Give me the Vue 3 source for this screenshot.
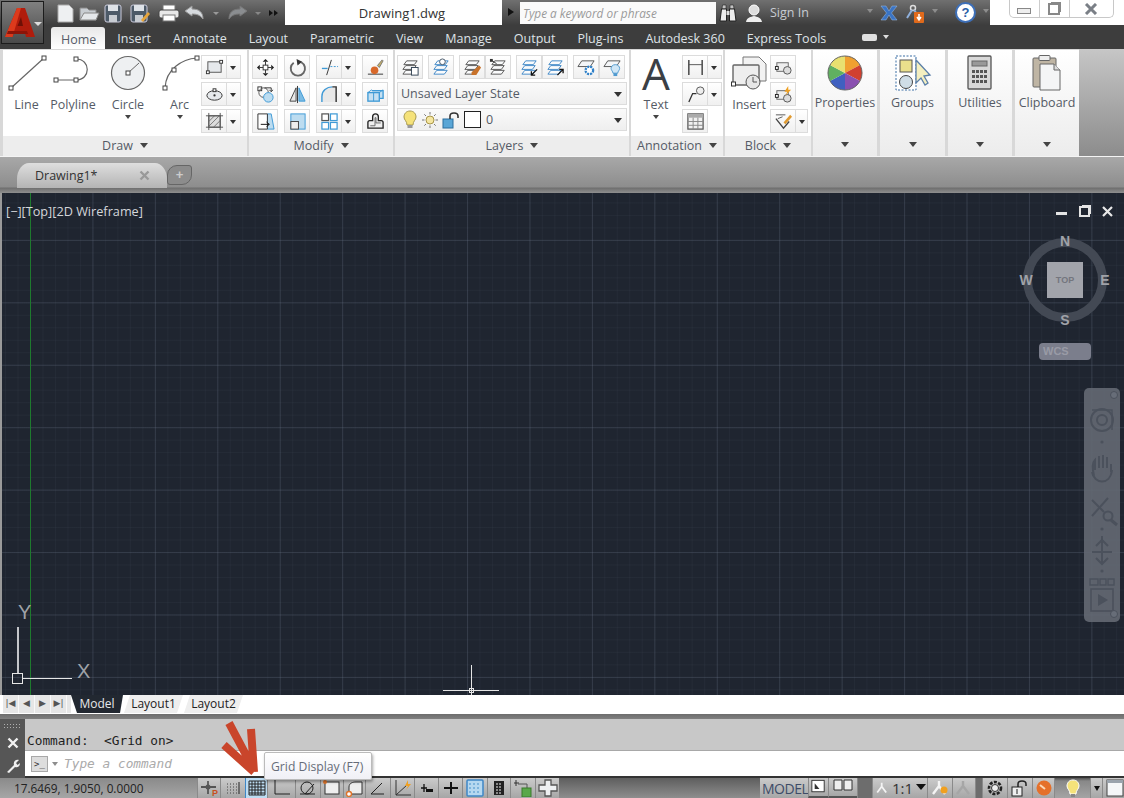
<template>
  <div class="app">
    <!-- application button sits over title bar and tabs -->
    <div class="app-btn">
      <svg width="36" height="36" viewBox="0 0 36 36">
        <path d="M3 32 L15 3 H23 L33 32 H24 L22.5 26 H13 L10.5 32 Z" fill="#b01c0c" />
        <path d="M3 32 L15 3 H19 L10.5 32 Z" fill="#dc3a1c" />
        <path d="M15.5 21 H21 L19 12 Z" fill="#6e1006" />
        <path d="M6 26 H25 L26 29 H5 Z" fill="#8c1408" />
      </svg>
      <span class="app-caret"></span>
    </div>

    <div class="titlebar">
      <div class="qat">
        <svg v-for="q in qat" :key="q.name" class="qi" :width="q.w" height="20" :viewBox="`0 0 ${q.w} 20`" v-html="q.svg"></svg>
      </div>
      <div class="docname">Drawing1.dwg</div>
      <div class="search-arrow"></div>
      <div class="search">Type a keyword or phrase</div>
      <div class="infocenter">
        <svg width="20" height="20" viewBox="0 0 20 20">
          <path d="M4.5 2 H8 V6 H4 Z M12 2 H15.5 L16 6 H12 Z" fill="#c4c4c4" stroke="#222" stroke-width="0.6" />
          <path d="M2 18 L3.5 6 H8.5 V18 Z M11.5 18 V6 H16.5 L18 18 Z" fill="#ececec" stroke="#222" />
          <rect x="8.5" y="8" width="3" height="4" fill="#ddd" />
        </svg>
        <svg width="18" height="20" viewBox="0 0 18 20">
          <circle cx="9" cy="7" r="5" fill="#ddd" stroke="#fff" />
          <path d="M1 19 C2 14 6 14 9 13 C12 14 16 14 17 19 Z" fill="#eee" />
        </svg>
        <span class="signin">Sign In</span>
        <span class="mini-caret"></span>
        <svg width="18" height="18" viewBox="0 0 18 18">
          <path d="M1 2 H6 L9 7 L12 2 H17 L11.5 9 L17 16 H12 L9 11 L6 16 H1 L6.5 9 Z" fill="#3a74c4" stroke="#9dbce6" stroke-width="0.5" />
        </svg>
        <svg width="20" height="20" viewBox="0 0 20 20">
          <circle cx="8" cy="5" r="2.5" fill="none" stroke="#ddd" stroke-width="1.5" />
          <path d="M7 7 L2 15 M9 7 L12 11" stroke="#8fb0dc" stroke-width="2" />
          <rect x="9" y="9" width="10" height="11" rx="1" fill="#e06a1c" />
          <path d="M14 11 V16 M12 14 L14 17 L16 14" stroke="#fff" stroke-width="1.5" fill="none" />
        </svg>
        <span class="mini-caret"></span>
        <span class="help">?</span>
        <span class="mini-caret"></span>
      </div>
      <div class="winctl">
        <div class="winbtns">
          <span class="wb"><i class="w-min"></i></span>
          <span class="wb"><i class="w-res"></i></span>
          <span class="wb wb-x">
            <svg width="14" height="12" viewBox="0 0 14 12"><path d="M2 1 L12 11 M12 1 L2 11" stroke="#7a7f86" stroke-width="3" /></svg>
          </span>
        </div>
      </div>
    </div>

    <div class="tabs">
      <span v-for="(t, i) in tabs" :key="t" class="tab" :class="{ active: i === 0 }">{{ t }}</span>
      <span class="tab-pill"></span>
      <span class="tab-pill-caret"></span>
    </div>

    <div class="ribbon">
      <section class="panel" style="width:244px">
        <div class="pbody draw-body">
          <div v-for="b in drawBtns" :key="b.label" class="big" :style="{ width: b.w + 'px' }">
            <svg width="44" height="36" viewBox="0 0 44 36" v-html="b.svg"></svg>
            <span class="biglabel">{{ b.label }}</span>
            <span v-if="b.caret" class="mini-caret dark"></span>
          </div>
          <div class="col">
            <div v-for="k in ['rect','ellipse','hatch']" :key="k" class="split">
              <span class="sb"><svg class="ic" viewBox="0 0 20 20" v-html="icons[k]"></svg></span><span class="sb-arrow"></span>
            </div>
          </div>
        </div>
        <div class="pfoot">Draw<span class="foot-caret"></span></div>
      </section>

      <section class="panel" style="width:144px">
        <div class="pbody modify-body">
          <div v-for="(row, r) in modifyRows" :key="r" class="row">
            <span class="sb"><svg class="ic" viewBox="0 0 20 20" v-html="icons[row[0]]"></svg></span>
            <span class="sb"><svg class="ic" viewBox="0 0 20 20" v-html="icons[row[1]]"></svg></span>
            <div class="split"><span class="sb"><svg class="ic" viewBox="0 0 20 20" v-html="icons[row[2]]"></svg></span><span class="sb-arrow"></span></div>
            <span class="sb"><svg class="ic" viewBox="0 0 20 20" v-html="icons[row[3]]"></svg></span>
          </div>
        </div>
        <div class="pfoot">Modify<span class="foot-caret"></span></div>
      </section>

      <section class="panel" style="width:234px">
        <div class="pbody layers-body">
          <div class="row layer-row">
            <span class="sb"><svg class="ic" viewBox="0 0 20 20" v-html="layer('#555', '<rect x=&quot;11&quot; y=&quot;10&quot; width=&quot;7&quot; height=&quot;8&quot; fill=&quot;#fff&quot; stroke=&quot;#345&quot;/>')"></svg></span>
            <span class="sb"><svg class="ic" viewBox="0 0 20 20" v-html="layer('#3f87c6', '<circle cx=&quot;11&quot; cy=&quot;4&quot; r=&quot;3&quot; fill=&quot;#fff&quot; stroke=&quot;#456&quot;/>')"></svg></span>
            <div class="join">
              <span class="sb"><svg class="ic" viewBox="0 0 20 20" v-html="layer('#555', '<path d=&quot;M9 15 L17 8 L19 10 L14 18 H9 Z&quot; fill=&quot;#c8722a&quot;/>')"></svg></span>
              <span class="sb"><svg class="ic" viewBox="0 0 20 20" v-html="layer('#555', '<path d=&quot;M2 2 L8 6&quot; stroke=&quot;#333&quot;/><rect x=&quot;1&quot; y=&quot;1&quot; width=&quot;3&quot; height=&quot;3&quot; fill=&quot;#333&quot;/>')"></svg></span>
            </div>
            <div class="join">
              <span class="sb"><svg class="ic" viewBox="0 0 20 20" v-html="layer('#3f87c6', '<path d=&quot;M18 12 L12 18 M12 14 V18 H16&quot; stroke=&quot;#111&quot; stroke-width=&quot;1.4&quot; fill=&quot;none&quot;/>')"></svg></span>
              <span class="sb"><svg class="ic" viewBox="0 0 20 20" v-html="layer('#3f87c6', '<path d=&quot;M12 18 L18 12 M14 12 H18 V16&quot; stroke=&quot;#111&quot; stroke-width=&quot;1.4&quot; fill=&quot;none&quot;/>')"></svg></span>
            </div>
            <div class="join">
              <span class="sb"><svg class="ic" viewBox="0 0 20 20" v-html="layerGear"></svg></span>
              <span class="sb"><svg class="ic" viewBox="0 0 20 20" v-html="layerBulb"></svg></span>
            </div>
          </div>
          <div class="combo">Unsaved Layer State<span class="combo-caret"></span></div>
          <div class="combo combo-layer">
            <svg width="16" height="20" viewBox="0 0 16 20">
              <path d="M8 1 C12 1 14 4 14 7 C14 10 11 11 11 15 H5 C5 11 2 10 2 7 C2 4 4 1 8 1 Z" fill="#f5e27a" stroke="#a89a50" />
              <rect x="5.5" y="15" width="5" height="3" fill="#999" />
            </svg>
            <svg width="18" height="18" viewBox="0 0 18 18">
              <circle cx="9" cy="9" r="4" fill="#f5e6a0" stroke="#a8964a" />
              <path d="M9 1 V3.5 M9 14.5 V17 M1 9 H3.5 M14.5 9 H17 M3.3 3.3 L5 5 M13 13 L14.7 14.7 M14.7 3.3 L13 5 M5 13 L3.3 14.7" stroke="#777" />
            </svg>
            <svg width="18" height="18" viewBox="0 0 18 18">
              <rect x="1" y="8" width="10" height="9" fill="#5aa6d6" stroke="#2d6f9e" />
              <path d="M8 8 V5 C8 1 16 1 16 5 V7" fill="none" stroke="#333" stroke-width="1.6" />
            </svg>
            <span class="swatch"></span>
            <span class="layer-zero">0</span>
            <span class="combo-caret"></span>
          </div>
        </div>
        <div class="pfoot">Layers<span class="foot-caret"></span></div>
      </section>

      <section class="panel" style="width:92px">
        <div class="pbody anno-body">
          <div class="big text-btn">
            <span class="big-a">A</span>
            <span class="biglabel">Text</span>
            <span class="mini-caret dark"></span>
          </div>
          <div class="col">
            <div class="split"><span class="sb"><svg class="ic" viewBox="0 0 20 20" v-html="icons.dim"></svg></span><span class="sb-arrow"></span></div>
            <div class="split"><span class="sb"><svg class="ic" viewBox="0 0 20 20" v-html="icons.leader"></svg></span><span class="sb-arrow"></span></div>
            <span class="sb"><svg class="ic" viewBox="0 0 20 20" v-html="icons.table"></svg></span>
          </div>
        </div>
        <div class="pfoot">Annotation<span class="foot-caret"></span></div>
      </section>

      <section class="panel" style="width:86px">
        <div class="pbody block-body">
          <div class="big insert-btn">
            <svg width="36" height="36" viewBox="0 0 36 36">
              <path d="M12 2 H28 L35 9 V26 H12 Z" fill="#f2f2f2" stroke="#777" />
              <rect x="2" y="10" width="26" height="20" rx="1" fill="#eee" stroke="#666" stroke-width="1.4" />
              <circle cx="22" cy="27" r="7" fill="#e6e6e6" stroke="#555" />
              <path d="M22 22 V27 H26" stroke="#555" fill="none" />
              <rect x="0.5" y="27" width="4" height="4" fill="#fff" stroke="#333" />
            </svg>
            <span class="biglabel">Insert</span>
          </div>
          <div class="col">
            <span class="sb"><svg class="ic" viewBox="0 0 20 20" v-html="icons.blockA"></svg></span>
            <span class="sb"><svg class="ic" viewBox="0 0 20 20" v-html="icons.blockB"></svg></span>
            <div class="split"><span class="sb"><svg class="ic" viewBox="0 0 20 20" v-html="icons.blockC"></svg></span><span class="sb-arrow narrow"></span></div>
          </div>
        </div>
        <div class="pfoot">Block<span class="foot-caret"></span></div>
      </section>

      <section v-for="s in slideouts" :key="s.label" class="slide" :style="{ width: s.w + 'px', marginLeft: s.m + 'px' }">
        <svg width="44" height="36" viewBox="0 0 44 36" v-html="s.svg"></svg>
        <span class="slide-label">{{ s.label }}</span>
        <span class="slide-caret"></span>
      </section>
      <div class="ribbon-rest"></div>
    </div>

    <div class="docbar">
      <div class="doctab">
        <span>Drawing1*</span>
        <svg width="11" height="11" viewBox="0 0 11 11"><path d="M1.5 1.5 L9.5 9.5 M9.5 1.5 L1.5 9.5" stroke="#999" stroke-width="2.4" /></svg>
      </div>
      <div class="newtab"><span>+</span></div>
    </div>

    <div class="viewport">
      <i class="y-axis"></i>
      <div class="vp-label">[−][Top][2D Wireframe]</div>

      <div class="vp-controls">
        <i class="vc-min"></i><i class="vc-res"></i>
        <svg width="11" height="11" viewBox="0 0 11 11"><path d="M1 1 L10 10 M10 1 L1 10" stroke="#e8e8e8" stroke-width="2.2" /></svg>
      </div>

      <div class="cube">
        <div class="cube-ring"></div>
        <div class="cube-top">TOP</div>
        <span class="dir n">N</span><span class="dir s">S</span><span class="dir w">W</span><span class="dir e">E</span>
      </div>
      <div class="wcs">WCS</div>

      <div class="navbar">
        <svg width="36" height="234" viewBox="0 0 36 234">
          <g fill="none" stroke="#4b515c" stroke-width="2">
            <circle cx="18" cy="32" r="11" />
            <circle cx="18" cy="32" r="5" />
            <path d="M8 22 H28 V42" stroke-width="1.4" />
            <path d="M10 88 C8 80 9 74 11 72 V82 M15 80 V68 M19 80 V67 M23 80 V69 M27 84 V76 M8 84 C10 96 26 98 28 82" />
            <path d="M8 112 L20 124 M24 110 L8 128" />
            <circle cx="24" cy="128" r="4.5" />
            <path d="M27 132 L33 137" stroke-width="3" />
            <path d="M18 148 V176 M8 164 H28" />
            <path d="M12 158 L18 152 L24 158 M12 170 L18 176 L24 170" />
            <rect x="7" y="201" width="22" height="22" stroke-width="1.6" />
            <path d="M14 206 L24 212 L14 218 Z" fill="#4b515c" stroke="none" />
            <path d="M6 191 H14 V197 H6 Z M16 191 H22 V197 H16 Z M24 191 H30 V197 H24 Z" stroke-width="1.4" />
          </g>
          <g fill="#4b515c">
            <circle cx="18" cy="54" r="1.6" /><circle cx="18" cy="141" r="1.6" /><circle cx="18" cy="183" r="1.6" />
          </g>
          <circle cx="30" cy="7" r="3.5" fill="#676d78" stroke="#4b515c" />
          <circle cx="30" cy="226" r="3.5" fill="#676d78" stroke="#4b515c" />
        </svg>
      </div>

      <div class="ucs">
        <span class="ucs-y">Y</span>
        <span class="ucs-x">X</span>
        <i class="ucs-v"></i><i class="ucs-h"></i><i class="ucs-box"></i>
      </div>

      <div class="cross"><i class="cross-v"></i><i class="cross-h"></i><i class="cross-b"></i></div>
    </div>

    <div class="layoutbar">
      <div class="navs">
        <span v-for="n in navBtns" :key="n" class="nav-btn">{{ n }}</span>
      </div>
      <span class="ltab model">Model</span>
      <span class="ltab">Layout1</span>
      <span class="ltab">Layout2</span>
    </div>

    <div class="divider"></div>

    <div class="cmd">
      <div class="cmd-side">
        <span class="grip"></span>
        <svg width="12" height="12" viewBox="0 0 12 12"><path d="M1.5 1.5 L10.5 10.5 M10.5 1.5 L1.5 10.5" stroke="#f0f0f0" stroke-width="2.4" /></svg>
        <svg width="16" height="16" viewBox="0 0 16 16"><path d="M2 14 L9 7 C8 3 11 1 14 2 L11 5 L12.5 7 L15 5 C15 9 12 10 10 9 L4 15 Z" fill="#f0f0f0" /></svg>
      </div>
      <div class="cmd-main">
        <div class="cmd-hist">{{ lastCommand }}</div>
        <div class="cmd-input">
          <span class="prompt">&gt;_</span>
          <span class="mini-caret cmd-caret"></span>
          <span class="cmd-ph">Type a command</span>
        </div>
      </div>
    </div>

    <div class="status">
      <span class="coords">17.6469, 1.9050, 0.0000</span>
      <span v-for="b in statusLeft" :key="b.k" class="st" :class="{ on: b.on }" :style="{ width: b.w + 'px' }">
        <svg width="20" height="18" viewBox="0 0 20 18" v-html="b.svg"></svg>
      </span>
      <div class="st-fill"></div>
      <span class="model-btn">MODEL</span>
      <span v-for="b in statusRight" :key="b.k" class="st" :class="b.cls" :style="{ width: b.w + 'px' }">
        <svg v-if="b.svg" width="20" height="18" viewBox="0 0 20 18" v-html="b.svg"></svg>
        <em v-if="b.text">{{ b.text }}</em>
      </span>
    </div>

    <!-- tooltip and annotation arrow lie over the command line -->
    <div class="tip">Grid Display (F7)</div>
    <svg class="red-arrow" width="44" height="60" viewBox="0 0 44 60">
      <path d="M8 3 L33 50 M30 9 L33 52 M3 25 L33 52" fill="none" stroke="#c9452b" stroke-width="8" />
    </svg>
  </div>
</template>

<script setup>
const tabs = ["Home", "Insert", "Annotate", "Layout", "Parametric", "View", "Manage", "Output", "Plug-ins", "Autodesk 360", "Express Tools"]

const navBtns = ["|◀", "◀", "▶", "▶|"]

const lastCommand = "Command:  <Grid on>"

const node = (x, y) => `<rect x="${x - 2}" y="${y - 2}" width="4" height="4" fill="#fff" stroke="#444"/>`

const qat = [
  { name: "new", w: 24, svg: '<path d="M6 2 H17 L21 6 V19 H6 Z" fill="#eef0f2" stroke="#aaa"/>' },
  { name: "open", w: 24, svg: '<path d="M3 5 H10 L12 7 H19 V17 H3 Z" fill="#c8cdd2" stroke="#888"/><path d="M3 17 L7 10 H22 L19 17 Z" fill="#e4e7ea" stroke="#888"/>' },
  { name: "save", w: 26, svg: '<rect x="3" y="2" width="16" height="17" rx="2" fill="#4d5a68" stroke="#ccd"/><rect x="6" y="2" width="10" height="6" fill="#dfe3e8"/><rect x="7" y="12" width="8" height="7" fill="#c8ccd2"/>' },
  { name: "saveas", w: 26, svg: '<rect x="2" y="2" width="16" height="17" rx="2" fill="#4d5a68" stroke="#ccd"/><rect x="5" y="2" width="10" height="6" fill="#dfe3e8"/><rect x="6" y="12" width="8" height="7" fill="#c8ccd2"/><path d="M12 17 L19 9 L21 11 L14 19 Z" fill="#e8a53a"/>' },
  { name: "plot", w: 26, svg: '<rect x="7" y="2" width="12" height="6" fill="#fff" stroke="#777"/><rect x="3" y="7" width="20" height="8" rx="2" fill="#e8e8e8" stroke="#444"/><rect x="7" y="12" width="12" height="6" fill="#fff" stroke="#777"/>' },
  { name: "undo", w: 26, svg: '<path d="M2 8 L9 3 V6 C16 6 20 9 20 16 C17 12 14 11 9 11 V13 Z" fill="#d6dade" stroke="#999"/>' },
  { name: "undoc", w: 14, svg: '<path d="M3 9 H9 L6 12 Z" fill="#999"/>' },
  { name: "redo", w: 26, svg: '<path d="M22 8 L15 3 V6 C8 6 4 9 4 16 C7 12 10 11 15 11 V13 Z" fill="#8a8d90" stroke="#777"/>' },
  { name: "redoc", w: 14, svg: '<path d="M3 9 H9 L6 12 Z" fill="#888"/>' },
  { name: "more", w: 14, svg: '<path d="M2 7 L6 10 L2 13 Z M7 7 L11 10 L7 13 Z" fill="#111"/>' },
]

const drawBtns = [
  { label: "Line", w: 43, svg: `<path d="M6 33 L39 3" stroke="#666" stroke-width="1.2"/>${node(6, 33)}${node(39, 3)}` },
  { label: "Polyline", w: 50, svg: `<path d="M5 25 H25 M25 4 C40 4 40 25 25 25" stroke="#666" fill="none" stroke-width="1.2"/>${node(5, 25)}${node(25, 25)}${node(25, 4)}` },
  { label: "Circle", w: 60, caret: true, svg: `<circle cx="22" cy="18" r="16.5" fill="#eef0f2" stroke="#666" stroke-width="1.2"/><path d="M22 18 L33 8" stroke="#666"/>${node(22, 18)}` },
  { label: "Arc", w: 43, caret: true, svg: `<path d="M7 33 C8 14 24 4 39 3" stroke="#666" fill="none" stroke-width="1.2"/>${node(7, 33)}${node(16, 15)}${node(39, 3)}` },
]

const blue = "#3f9ad6"
const icons = {
  rect: `<rect x="3" y="4" width="14" height="11" fill="#e6e9ec" stroke="#555"/><rect x="1.5" y="13.5" width="3" height="3" fill="#fff" stroke="#333"/><rect x="15.5" y="2.5" width="3" height="3" fill="#fff" stroke="#333"/>`,
  ellipse: `<ellipse cx="10" cy="11" rx="8" ry="5" fill="#e6e9ec" stroke="#333"/><circle cx="10" cy="11" r="1.2" fill="#333"/><rect x="8.5" y="4" width="3" height="3" fill="#fff" stroke="#333"/>`,
  hatch: `<rect x="4" y="4" width="12" height="12" fill="#ddd" stroke="#555"/><path d="M4 10 L10 4 M4 15 L15 4 M9 16 L16 9" stroke="#777"/><path d="M1 4 H19 M1 16 H19 M4 1 V19 M16 1 V19" stroke="#555"/>`,
  move: `<path d="M10 1 L13 4 H7 Z M10 19 L13 16 H7 Z M1 10 L4 7 V13 Z M19 10 L16 7 V13 Z" fill="#222"/><path d="M4 10 H16 M10 4 V16" stroke="#333"/><rect x="7.5" y="7.5" width="5" height="5" fill="#fff" stroke="#333"/>`,
  rotate: `<path d="M6 5 A7.5 7.5 0 1 0 14 4.5" fill="none" stroke="#666" stroke-width="2"/><path d="M9 1 L15 4 L10 8 Z" fill="#333"/>`,
  trim: `<path d="M2 11 H8" stroke="${blue}" stroke-width="1.4"/><path d="M12 2 L7 18" stroke="#333"/><path d="M11 9 H19" stroke="${blue}" stroke-dasharray="2 1.5"/>`,
  brush: `<path d="M2 17 H18" stroke="#333"/><path d="M12 8 L17 2 L18 3 L14 10 Z" fill="#c8b060" stroke="#777"/><circle cx="9" cy="13" r="4" fill="#d8682a"/>`,
  copy: `<rect x="2" y="2" width="4" height="4" fill="#fff" stroke="#333"/><circle cx="8" cy="8" r="5" fill="none" stroke="#555"/><circle cx="13" cy="13" r="5" fill="#bcdcf0" stroke="${blue}"/><path d="M9 3 H16 V7 M14 5 L16 7 L18 5" fill="none" stroke="#333"/>`,
  mirror: `<path d="M8.5 3 L2 17 H8.5 Z" fill="#e8e8e8" stroke="#444"/><path d="M11.5 3 L18 17 H11.5 Z" fill="#7cbce4" stroke="${blue}"/><path d="M10 1 V19" stroke="#333"/>`,
  fillet: `<path d="M2 18 V12 C2 6 7 2 13 2 H17 V18" fill="#e8e8e8" stroke="none"/><path d="M2 18 V12 C2 6 7 2 13 2" fill="none" stroke="${blue}" stroke-width="1.5"/><path d="M13 2 H17 V18" fill="none" stroke="#333" stroke-width="1.5"/>`,
  solid: `<path d="M6 6 H18 V14 H14" fill="#c5e0f2" stroke="${blue}" stroke-width="1.4"/><rect x="2" y="8" width="12" height="9" fill="#c5e0f2" stroke="${blue}" stroke-width="1.4"/><path d="M2 8 L6 5 M14 8 L18 5 M8 8 V17" stroke="${blue}"/>`,
  stretch: `<path d="M12 2 H16 L19 18 H12 Z" fill="#bcdcf0" stroke="${blue}"/><path d="M2 2 H12 V18 H2 Z" fill="#fff" stroke="#333"/><path d="M5 13 H14 M11 10.5 L14 13 L11 15.5" stroke="#111" fill="none"/>`,
  scale: `<rect x="3" y="2" width="15" height="16" fill="#bcdcf0" stroke="${blue}"/><rect x="3" y="10" width="8" height="8" fill="#eee" stroke="#444"/>`,
  array: `<g fill="#fff" stroke="${blue}" stroke-width="1.3"><rect x="2" y="2" width="7" height="7" stroke="#555"/><rect x="11" y="2" width="7" height="7"/><rect x="2" y="11" width="7" height="7"/><rect x="11" y="11" width="7" height="7"/></g>`,
  explode: `<path d="M2 17 V11 Q2 9 4 9 H7 V5 C7 1 13 1 13 5 V9 H16 Q18 9 18 11 V17 Z" fill="#eee" stroke="#222" stroke-width="1.4"/><path d="M4.5 14.5 H9.5 V6 H10.5 V11.5 H15.5" fill="none" stroke="#666"/>`,
  dim: `<path d="M3 2 V18 M17 2 V18" stroke="#333" stroke-width="1.4"/><path d="M3 7 H17" stroke="#555"/>`,
  leader: `<path d="M3 18 L7 9 H11" fill="none" stroke="#333" stroke-width="1.4"/><circle cx="15" cy="6" r="4" fill="#eee" stroke="#555"/>`,
  table: `<rect x="2" y="2" width="16" height="16" fill="#f0f0f0" stroke="#555" stroke-width="1.3"/><rect x="2" y="2" width="16" height="4" fill="#aaa"/><path d="M2 10 H18 M2 14 H18 M7.5 6 V18 M12.5 6 V18" stroke="#888"/>`,
  blockA: `<rect x="3" y="5" width="12" height="9" fill="#eee" stroke="#666"/><circle cx="14" cy="13" r="4" fill="#ddd" stroke="#555"/><rect x="1.5" y="9" width="3" height="3" fill="#fff" stroke="#222"/>`,
  blockB: `<rect x="3" y="6" width="12" height="9" fill="#eee" stroke="#666"/><circle cx="14" cy="14" r="4" fill="#ddd" stroke="#555"/><rect x="1.5" y="10" width="3" height="3" fill="#fff" stroke="#222"/><path d="M15 1 L11 7 H14 L12 11 L18 5 H15 Z" fill="#f0a020"/>`,
  blockC: `<path d="M2 7 L10 17 L16 10" fill="#f4f4f4" stroke="#444" stroke-width="1.4"/><path d="M2 3 H12 M4 7 L9 5" stroke="#555"/><path d="M10 11 L17 3 L19 5 L12 13 Z" fill="#e09a30"/>`,
}

const modifyRows = [
  ["move", "rotate", "trim", "brush"],
  ["copy", "mirror", "fillet", "solid"],
  ["stretch", "scale", "array", "explode"],
]

// stacked sheets used by most of the layer tools, with a small badge on top
const layer = (color, badge) => `<g fill="#fafbfc" stroke="${color}"><path d="M6 3 H17 L14 7 H3 Z"/><path d="M5 8 H16 L13 12 H2 Z"/><path d="M5 13 H16 L13 17 H2 Z"/></g>${badge}`
const layerSheet = '<path d="M5 3 H18 L14 9 H1 Z" fill="#f4f6f8" stroke="#555"/>'
const layerGear = `${layerSheet}<circle cx="13" cy="13" r="4" fill="#fff" stroke="#2f80c8" stroke-width="2.4" stroke-dasharray="2.2 1"/>`
const layerBulb = `${layerSheet}<path d="M13 7 C16 7 17.5 9 17.5 11 C17.5 13 15.5 14 15.5 16 H10.5 C10.5 14 8.5 13 8.5 11 C8.5 9 10 7 13 7 Z" fill="#cfe6f6" stroke="#4f9ad0"/><rect x="11" y="16" width="4" height="3" fill="#4f9ad0"/>`

const slideouts = [
  {
    label: "Properties", w: 64, m: 0,
    svg: `<path d="M22 18 L22 1 A17 17 0 0 1 37 10 Z" fill="#f0a030"/><path d="M22 18 L37 10 A17 17 0 0 1 37 26 Z" fill="#d04030"/><path d="M22 18 L37 26 A17 17 0 0 1 22 35 Z" fill="#8a50b0"/><path d="M22 18 L22 35 A17 17 0 0 1 7 26 Z" fill="#4060c0"/><path d="M22 18 L7 26 A17 17 0 0 1 7 10 Z" fill="#60b060"/><path d="M22 18 L7 10 A17 17 0 0 1 22 1 Z" fill="#e8e070"/><circle cx="22" cy="18" r="17" fill="none" stroke="#666"/>`,
  },
  {
    label: "Groups", w: 65, m: 3,
    svg: `<rect x="5" y="1" width="20" height="34" fill="#fff" stroke="#3a6ea5" stroke-dasharray="2 1.5"/><rect x="9" y="5" width="12" height="12" fill="#eadf8c" stroke="#555"/><circle cx="15" cy="27" r="6.5" fill="#cfdde6" stroke="#444"/><path d="M25 5 V28 L30 23 L34 30 L37 28 L33 21 L39 20 Z" fill="#f4efc0" stroke="#5b7fa8" stroke-width="1.3"/>`,
  },
  {
    label: "Utilities", w: 64, m: 3,
    svg: `<rect x="10" y="1" width="23" height="33" rx="1" fill="#d8d8d8" stroke="#555" stroke-width="1.3"/><rect x="14" y="6" width="15" height="5" fill="#999" stroke="#666"/><g fill="#555"><rect x="14" y="15" width="3" height="3"/><rect x="18" y="15" width="3" height="3"/><rect x="22" y="15" width="3" height="3"/><rect x="26" y="15" width="3" height="3"/><rect x="14" y="20" width="3" height="3"/><rect x="18" y="20" width="3" height="3"/><rect x="22" y="20" width="3" height="3"/><rect x="26" y="20" width="3" height="3"/><rect x="14" y="25" width="3" height="3"/><rect x="18" y="25" width="3" height="3"/><rect x="22" y="25" width="3" height="3"/><rect x="26" y="25" width="3" height="3"/></g>`,
  },
  {
    label: "Clipboard", w: 64, m: 3,
    svg: `<rect x="8" y="3" width="23" height="29" rx="1" fill="#bfb5a4" stroke="#666"/><rect x="14" y="0.5" width="11" height="5" rx="1" fill="#eee" stroke="#666"/><path d="M15 9 H29 L35 15 V35 H15 Z" fill="#f4f5f6" stroke="#666"/><path d="M29 9 V15 H35" fill="#ddd" stroke="#666"/>`,
  },
]

const stroke = 'fill="none" stroke="#222"'
const statusLeft = [
  { k: "infer", w: 23, svg: `<path d="M9 2 V15 M2 8 H17" stroke="#333" stroke-width="1.3"/><circle cx="9" cy="8" r="2.5" fill="#555"/><text x="13" y="17" font-size="9" font-weight="700" fill="#c8501e" font-family="Liberation Sans, sans-serif">P</text>` },
  { k: "snap", w: 25, svg: `<path d="M4 5 H16 M4 8 H16 M4 11 H16 M4 14 H16" stroke="#444" stroke-dasharray="1 2"/><path d="M16 3 V15" stroke="#222"/>` },
  { k: "grid", w: 22, on: true, svg: `<path d="M2 2 H18 V16 H2 Z M2 5 H18 M2 8 H18 M2 11 H18 M2 14 H18 M5 2 V16 M8 2 V16 M11 2 V16 M14 2 V16" ${stroke}/>` },
  { k: "ortho", w: 28, svg: `<path d="M3 1 V15 H18" ${stroke}/>` },
  { k: "polar", w: 25, svg: `<path d="M2 15 H17 M7 15 L16 5" ${stroke}/><circle cx="9" cy="9" r="6" ${stroke}/>` },
  { k: "osnap", w: 23, svg: `<rect x="3" y="3" width="14" height="12" fill="#eee" stroke="#333"/><circle cx="3" cy="3" r="2" fill="#e0742a"/>` },
  { k: "track", w: 22, svg: `<path d="M4 15 V8 C4 4 8 3 11 3 H17 V15 Z" fill="#eee" stroke="#333"/><circle cx="4" cy="15" r="2.5" fill="#fff" stroke="#e0742a" stroke-width="1.4"/>` },
  { k: "ducs", w: 25, svg: `<path d="M3 15 H16 M3 15 L14 4" ${stroke}/>` },
  { k: "dyn", w: 24, svg: `<path d="M3 1 V16 H18 M3 16 L14 6" fill="none" stroke="#333"/><path d="M15 1 L12 7 H15 L13 11 L18 5 H15 Z" fill="#f0a020"/>` },
  { k: "lwt", w: 24, svg: `<path d="M4 9 H10 M7 5 V13" stroke="#111" stroke-width="1.3"/><rect x="9" y="10" width="7" height="3" fill="#111"/>` },
  { k: "tpy", w: 24, svg: `<path d="M3 9 H17" stroke="#111" stroke-width="2"/><path d="M10 3 V15" stroke="#111" stroke-width="2"/>` },
  { k: "qp", w: 25, svg: `<rect x="2" y="1" width="16" height="16" rx="1" fill="#b6d8f0" stroke="#3f87c6" stroke-width="1.5"/><path d="M4 5 H16 M4 9 H16 M4 13 H16" stroke="#7fb4dc" stroke-width="2" stroke-dasharray="2 2"/>` },
  { k: "sc", w: 23, svg: `<rect x="5" y="2" width="10" height="14" fill="#222"/><path d="M7 5 H13 M7 8 H13 M7 11 H13 M7 14 H13" stroke="#eee" stroke-dasharray="2 1"/>` },
  { k: "am", w: 25, svg: `<path d="M1 4 H6 M3 1 V7" stroke="#333"/><path d="M5 5 H14 V14" fill="none" stroke="#555"/><rect x="9" y="9" width="9" height="9" fill="#5aa84a" stroke="#3a7a2c"/>` },
  { k: "cross", w: 24, svg: `<path d="M7 1 H13 V6 H19 V12 H13 V17 H7 V12 H1 V6 H7 Z" fill="#eef0f2" stroke="#555" stroke-width="1.3"/>` },
]

const annoFigure = (c) => `<path d="M9 2 V7 M9 7 L3 15 M9 7 L15 15" fill="none" stroke="${c}" stroke-width="2.4"/>`
const statusRight = [
  { k: "mini", w: 20, cls: "lined", svg: `<rect x="3" y="2" width="13" height="12" fill="#fff" stroke="#333"/><path d="M6 5 V11 H11 Z" fill="#333"/>` },
  { k: "layouts", w: 29, cls: "lined", svg: `<path d="M1 2 H9 V12 H1 Z M11 2 H19 V12 H11 Z" fill="#eee" stroke="#333"/>` },
  { k: "gap1", w: 15, cls: "dark" },
  { k: "scale", w: 55, text: "1:1", cls: "scale", svg: annoFigure("#f4f4f4") },
  { k: "vis", w: 25, svg: annoFigure("#f4f4f4") + '<circle cx="14" cy="11" r="3.5" fill="#f0a020"/>' },
  { k: "auto", w: 23, svg: annoFigure("#a6a6a6") },
  { k: "gap2", w: 7, cls: "dark" },
  { k: "gear", w: 25, svg: `<circle cx="10" cy="9" r="6" fill="none" stroke="#222" stroke-width="2.6" stroke-dasharray="3 1.4"/><circle cx="10" cy="9" r="3.5" fill="#eee" stroke="#333"/>` },
  { k: "lock", w: 25, svg: `<rect x="2" y="8" width="10" height="9" fill="#eee" stroke="#222"/><path d="M8 8 V5 C8 1 16 1 16 5 V7" fill="none" stroke="#222" stroke-width="1.5"/><path d="M7 10 V15" stroke="#222"/>` },
  { k: "hw", w: 22, svg: `<circle cx="10" cy="9" r="7.5" fill="#e5702a"/><path d="M6 6 L11 10" stroke="#fbd9b8" stroke-width="2"/>` },
  { k: "bulb", w: 36, cls: "bulb", svg: `<path d="M10 1 C14 1 16 4 16 7 C16 10 13 11 13 15 H7 C7 11 4 10 4 7 C4 4 6 1 10 1 Z" fill="#f5e27a" stroke="#fff"/><rect x="8" y="15" width="4" height="3" fill="#888"/>` },
  { k: "menu", w: 12, cls: "st-menu" },
  { k: "clean", w: 24, svg: `<rect x="2" y="1" width="16" height="16" fill="#f4f6f8" stroke="#444"/><rect x="2" y="1" width="16" height="3" fill="#9aa3ad"/>` },
]
</script>

<style scoped>
.app {
  position: relative;
  width: 1124px;
  height: 798px;
  overflow: hidden;
  display: flex;
  flex-direction: column;
  font-family: "Open Sans", "Liberation Sans", sans-serif;
  background: #fff;
}

.app-btn {
  position: absolute;
  left: 1px;
  top: 1px;
  width: 43px;
  height: 43px;
  box-sizing: border-box;
  padding: 3px 0 0 0;
  background: linear-gradient(#808080, #4a4a4a);
  border: 1px solid #1c1c1c;
  z-index: 3;
}
.app-caret {
  position: absolute;
  right: 1px;
  top: 20px;
  border: 4px solid transparent;
  border-top: 4px solid #ddd;
}

/* title bar */
.titlebar {
  height: 25px;
  flex: none;
  display: flex;
  background: linear-gradient(#707070, #3d3d3d);
}
.qat {
  width: 241px;
  margin-left: 44px;
  padding-left: 8px;
  box-sizing: border-box;
  display: flex;
  align-items: center;
  gap: 1px;
}
.qi {
  flex: none;
}
.docname {
  width: 217px;
  background: #fff;
  text-align: center;
  font-size: 13px;
  line-height: 27px;
  color: #333;
  padding-left: 17px;
  box-sizing: border-box;
}
.search-arrow {
  width: 17px;
  position: relative;
}
.search-arrow::after {
  content: "";
  position: absolute;
  left: 6px;
  top: 8px;
  border: 4.5px solid transparent;
  border-left: 6px solid #111;
}
.search {
  width: 196px;
  height: 22px;
  margin-top: 2px;
  margin-left: 1px;
  background: #fafafa;
  font-style: italic;
  font-size: 11.8px;
  line-height: 22px;
  padding-left: 3px;
  box-sizing: border-box;
  color: #9a9a9a;
}
.infocenter {
  flex: 1;
  display: flex;
  align-items: center;
  gap: 7px;
  padding-left: 2px;
}
.signin {
  font-size: 12.5px;
  color: #c8ccd2;
  width: 90px;
}
.help {
  width: 17px;
  height: 17px;
  border-radius: 50%;
  background: #fff;
  border: 2px solid #3d6fb8;
  color: #2a5ea8;
  font: bold 13px/17px "Liberation Sans", sans-serif;
  text-align: center;
  margin-left: 10px;
}
.mini-caret {
  width: 0;
  height: 0;
  border: 3px solid transparent;
  border-top: 4px solid #8d8d8d;
  display: inline-block;
}
.mini-caret.dark {
  border-top-color: #444;
  margin-top: 2px;
}
.winctl {
  width: 134px;
  background: #fff;
  padding-left: 19px;
  box-sizing: border-box;
}
.winbtns {
  width: 105px;
  height: 18px;
  display: flex;
  border: 1px solid #c8c8c8;
  border-top: none;
  border-radius: 0 0 5px 5px;
  box-sizing: border-box;
}
.wb {
  flex: 1;
  display: flex;
  align-items: center;
  justify-content: center;
  border-right: 1px solid #ccc;
}
.wb-x {
  flex: 1.5;
  border-right: none;
}
.w-min {
  width: 12px;
  height: 4px;
  border: 1px solid #888;
  background: #eee;
  margin-top: 4px;
}
.w-res {
  width: 8px;
  height: 8px;
  border: 2px solid #888;
  box-shadow: 2px -2px 0 -1px #888;
}

/* ribbon tabs */
.tabs {
  height: 24px;
  flex: none;
  background: #3d3d3d;
  display: flex;
  padding-left: 51px;
  box-sizing: border-box;
  align-items: flex-end;
}
.tab {
  font-size: 12.5px;
  line-height: 23px;
  height: 22px;
  color: #dfe3e8;
  margin-right: 22px;
}
.tab.active {
  margin-right: 12px;
  height: 20px;
  line-height: 21px;
  padding: 2px 9px 0 10px;
  color: #555b66;
  background: linear-gradient(#e8e8e8, #fff);
  border-radius: 3px 3px 0 0;
}
.tab-pill {
  width: 15px;
  height: 7px;
  margin: 0 6px 8px 14px;
  background: #e0e0e0;
  border-radius: 2px;
}
.tab-pill-caret {
  margin-bottom: 7px;
  border: 3px solid transparent;
  border-top: 4px solid #ddd;
  height: 0;
}

/* ribbon */
.ribbon {
  height: 108px;
  flex: none;
  display: flex;
  padding-left: 3px;
  padding-top: 1px;
  box-sizing: border-box;
  background: #d8d8d8;
  border-bottom: 1px solid #f4f4f4;
}
.panel {
  display: flex;
  flex-direction: column;
  background: #fff;
  margin-right: 2px;
  flex: none;
}
.pbody {
  height: 86px;
  padding-top: 5px;
  box-sizing: border-box;
}
.pfoot {
  height: 20px;
  background: #ededed;
  text-align: center;
  font-size: 12.5px;
  line-height: 20px;
  color: #555b66;
}
.foot-caret {
  display: inline-block;
  margin-left: 7px;
  border: 4px solid transparent;
  border-top: 5px solid #444;
  border-bottom: none;
  vertical-align: 2px;
}
.draw-body {
  display: flex;
  padding-left: 2px;
}
.big {
  display: flex;
  flex-direction: column;
  align-items: center;
  flex: none;
}
.biglabel {
  font-size: 12.5px;
  color: #555b66;
  line-height: 17px;
  margin-top: 5px;
}
.col {
  display: flex;
  flex-direction: column;
  gap: 3px;
}
.row {
  display: flex;
  gap: 6px;
  margin-bottom: 3px;
}
.sb {
  width: 26px;
  height: 24px;
  box-sizing: border-box;
  border: 1px solid #dcdcdc;
  background: linear-gradient(#fff, #f0f0f0);
  display: flex;
  align-items: center;
  justify-content: center;
  flex: none;
}
.ic {
  width: 19px;
  height: 19px;
  fill: none;
}
.split {
  display: flex;
}
.sb-arrow {
  width: 14px;
  height: 24px;
  box-sizing: border-box;
  border: 1px solid #dcdcdc;
  border-left: none;
  background: linear-gradient(#fff, #f0f0f0);
  position: relative;
}
.sb-arrow.narrow {
  width: 12px;
}
.sb-arrow::after {
  content: "";
  position: absolute;
  left: 3px;
  top: 10px;
  border: 3px solid transparent;
  border-top: 4px solid #333;
}
.modify-body {
  padding-left: 3px;
}
.layers-body {
  padding-left: 2px;
}
.layer-row {
  gap: 5px;
}
.join {
  display: flex;
}
.combo {
  width: 230px;
  height: 23px;
  box-sizing: border-box;
  margin-bottom: 3px;
  border: 1px solid #dcdcdc;
  background: linear-gradient(#fafafa, #efefef);
  font-size: 12.5px;
  line-height: 21px;
  color: #555b66;
  padding-left: 3px;
  position: relative;
  display: flex;
  align-items: center;
}
.combo-caret {
  position: absolute;
  right: 4px;
  top: 9px;
  border: 4px solid transparent;
  border-top: 5px solid #333;
  border-bottom: none;
}
.combo-layer {
  gap: 3px;
  padding-left: 4px;
}
.swatch {
  width: 15px;
  height: 15px;
  border: 1px solid #222;
  background: #fff;
  margin-left: 1px;
}
.layer-zero {
  margin-left: 2px;
}
.anno-body {
  display: flex;
  padding-left: 3px;
}
.text-btn {
  width: 44px;
  margin-right: 4px;
}
.big-a {
  font-family: "Open Sans", sans-serif;
  font-size: 44px;
  line-height: 36px;
  height: 36px;
  color: #3b3f45;
}
.block-body {
  display: flex;
  padding-left: 3px;
}
.insert-btn {
  width: 42px;
}
.slide {
  flex: none;
  height: 106px;
  padding-top: 5px;
  box-sizing: border-box;
  display: flex;
  flex-direction: column;
  align-items: center;
  background: linear-gradient(#fff, #ececec);
}
.slide-label {
  font-size: 12.5px;
  color: #555b66;
  margin-top: 3px;
  line-height: 17px;
}
.slide-caret {
  margin-top: 31px;
  border: 4px solid transparent;
  border-top: 5px solid #444;
  border-bottom: none;
}
.ribbon-rest {
  flex: 1;
  margin: -1px 0 0;
  background: linear-gradient(#c6c6c6, #8c8c8c);
}

/* document tabs */
.docbar {
  height: 36px;
  flex: none;
  box-sizing: border-box;
  padding: 6px 0 0 17px;
  display: flex;
  align-items: flex-start;
  background: linear-gradient(#a8a8a8 0, #8d8d8d 30px, #6e6e6e 31px, #8f8f8f 36px);
}
.doctab {
  width: 150px;
  height: 25px;
  box-sizing: border-box;
  padding: 0 17px 0 18px;
  display: flex;
  justify-content: space-between;
  align-items: center;
  background: linear-gradient(#dedede, #b4b4b4);
  border-radius: 12px 12px 0 0 / 16px 16px 0 0;
  font-size: 12.5px;
  color: #333;
}
.newtab {
  width: 25px;
  height: 20px;
  margin-top: 2px;
  background: #8c8c8c;
  border: 1px solid #666;
  border-radius: 10px 3px 10px 3px;
  box-sizing: border-box;
  color: #ccc;
  text-align: center;
  font: bold 13px/18px "Liberation Sans", sans-serif;
}

/* model space */
.viewport {
  flex: 1;
  position: relative;
  border-left: 2px solid #9a9a9a;
  background-color: #1f2530;
  background-image:
    linear-gradient(to right, rgba(130, 142, 165, 0.18) 1px, transparent 1px),
    linear-gradient(to bottom, rgba(130, 142, 165, 0.18) 1px, transparent 1px),
    linear-gradient(to right, rgba(130, 142, 165, 0.06) 1px, transparent 1px),
    linear-gradient(to bottom, rgba(130, 142, 165, 0.06) 1px, transparent 1px);
  background-size: 62.44px 62.44px, 62.44px 62.44px, 12.488px 12.488px, 12.488px 12.488px;
  background-position: 28px 46.9px, 28px 46.9px, 28px 46.9px, 28px 46.9px;
}
.y-axis {
  position: absolute;
  left: 28px;
  top: 0;
  bottom: 0;
  width: 1px;
  background: #1e7a2e;
}
.vp-label {
  position: absolute;
  left: 4px;
  top: 10px;
  font-size: 12.7px;
  line-height: 16px;
  color: #d4d6da;
}
.vp-controls {
  position: absolute;
  right: 11px;
  top: 13px;
  display: flex;
  align-items: center;
  gap: 12px;
}
.vc-min {
  width: 11px;
  height: 3px;
  background: #e4e4e4;
  margin-top: 4px;
}
.vc-res {
  width: 7px;
  height: 7px;
  border: 2px solid #e4e4e4;
  box-shadow: 2px -2px 0 -1px #e4e4e4;
}
.cube {
  position: absolute;
  left: 1021px;
  top: 45px;
  width: 84px;
  height: 84px;
}
.cube-ring {
  width: 84px;
  height: 84px;
  box-sizing: border-box;
  border: 9px solid #434954;
  border-radius: 50%;
}
.cube-top {
  position: absolute;
  left: 24px;
  top: 24px;
  width: 36px;
  height: 36px;
  background: #a2a4ab;
  color: #74767e;
  font: bold 9px/36px "Liberation Sans", sans-serif;
  text-align: center;
}
.dir {
  position: absolute;
  font: bold 14px/16px "Liberation Sans", sans-serif;
  color: #a0a2a8;
  width: 16px;
  text-align: center;
}
.n { left: 34px; top: -5px; }
.s { left: 34px; top: 74px; }
.w { left: -5px; top: 34px; }
.e { left: 74px; top: 34px; }
.wcs {
  position: absolute;
  left: 1037px;
  top: 150px;
  width: 52px;
  height: 17px;
  border-radius: 4px;
  background: #7b7e8c;
  color: #999ba6;
  font: bold 11px/17px "Liberation Sans", sans-serif;
  padding-left: 4px;
  box-sizing: border-box;
}
.navbar {
  position: absolute;
  left: 1082px;
  top: 195px;
  width: 36px;
  height: 234px;
  border-radius: 5px;
  background: rgba(100, 105, 115, 0.9);
}
.navbar svg {
  display: block;
}
.ucs-y,
.ucs-x {
  position: absolute;
  font: 20px/20px "Liberation Sans", sans-serif;
  color: #9ea2a8;
}
.ucs-y { left: 16px; top: 409px; }
.ucs-x { left: 75px; top: 468px; }
.ucs-v {
  position: absolute;
  left: 15px;
  top: 434px;
  width: 2px;
  height: 47px;
  background: #c4c6ca;
}
.ucs-h {
  position: absolute;
  left: 20px;
  top: 485px;
  width: 50px;
  height: 1px;
  background: #e6e6e6;
}
.ucs-box {
  position: absolute;
  left: 10px;
  top: 480px;
  width: 9px;
  height: 9px;
  border: 1px solid #e6e6e6;
}
.cross-v {
  position: absolute;
  left: 469px;
  top: 472px;
  width: 1px;
  height: 30px;
  background: #e4e4e4;
}
.cross-h {
  position: absolute;
  left: 441px;
  top: 497px;
  width: 56px;
  height: 1px;
  background: #e4e4e4;
}
.cross-b {
  position: absolute;
  left: 467px;
  top: 495px;
  width: 3px;
  height: 3px;
  border: 1px solid #e4e4e4;
}

/* layout tabs */
.layoutbar {
  height: 18px;
  flex: none;
  display: flex;
  align-items: stretch;
  padding-left: 3px;
  background: #fff;
}
.navs {
  display: flex;
  width: 68px;
  flex: none;
  background: #e6e6e6;
}
.nav-btn {
  width: 15px;
  font: 9px/17px "DejaVu Sans", sans-serif;
  text-align: center;
  color: #555;
  border-right: 1px solid #f8f8f8;
}
.ltab {
  width: 59px;
  font-size: 12px;
  line-height: 17px;
  color: #222;
  text-align: center;
  background: #eee;
  clip-path: polygon(6px 0, 100% 0, calc(100% - 6px) 100%, 0 100%);
  margin-right: 1px;
}
.ltab.model {
  width: 52px;
  background: #222831;
  color: #e6e8ea;
  clip-path: polygon(0 0, 100% 0, calc(100% - 3px) 100%, 6px 100%);
}
.divider {
  height: 6px;
  flex: none;
  background: linear-gradient(#fff 0, #fff 1px, #6d6d6d 1px, #808080 6px);
}

/* command line */
.cmd {
  height: 59px;
  flex: none;
  display: flex;
}
.cmd-side {
  width: 25px;
  flex: none;
  background: #565656;
  display: flex;
  flex-direction: column;
  align-items: center;
  gap: 9px;
  padding-top: 4px;
  box-sizing: border-box;
}
.grip {
  width: 19px;
  height: 5px;
  background-image: radial-gradient(#b0b0b0 1px, transparent 1px);
  background-size: 3px 3px;
}
.cmd-main {
  flex: 1;
  display: flex;
  flex-direction: column;
}
.cmd-hist {
  height: 32px;
  flex: none;
  background: #c8c8c8;
  box-sizing: border-box;
  padding: 13px 0 0 2px;
  font: 12.8px/17px "DejaVu Sans Mono", monospace;
  color: #1e1e1e;
  white-space: pre;
  border-bottom: 1px solid #a8a8a8;
}
.cmd-input {
  flex: 1;
  background: #fff;
  display: flex;
  align-items: center;
  padding-left: 6px;
  border-bottom: 2px solid #333;
}
.prompt {
  width: 15px;
  height: 14px;
  border: 1px solid #a8a8a8;
  background: #ddd;
  font: 9px/14px "DejaVu Sans Mono", monospace;
  color: #333;
  text-align: center;
}
.cmd-caret {
  margin: 3px 6px 0 4px;
}
.cmd-ph {
  font: italic 12.8px/17px "DejaVu Sans Mono", monospace;
  color: #aaa;
}

/* status bar */
.status {
  height: 20px;
  flex: none;
  display: flex;
  background: linear-gradient(#a4a4a4, #7a7a7a);
}
.coords {
  width: 197px;
  flex: none;
  padding-left: 14px;
  box-sizing: border-box;
  font-size: 11.8px;
  line-height: 21px;
  color: #222;
  background: linear-gradient(#8a8a8a, #a6a6a6);
}
.st {
  flex: none;
  box-sizing: border-box;
  display: flex;
  align-items: center;
  justify-content: center;
  border-left: 1px solid #8a8a8a;
  background: linear-gradient(#cbcbcb, #a6a6a6);
}
.st.on {
  background: #bcdcf2;
  border-left-color: #3f87c6;
}
.st-fill {
  width: 201px;
  flex: none;
  background: linear-gradient(#5e5e5e, #8e8e8e);
}
.model-btn {
  width: 48px;
  flex: none;
  padding-left: 2px;
  box-sizing: border-box;
  font: 14px/21px "Open Sans", sans-serif;
  color: #3d4c68;
  letter-spacing: -0.5px;
  background: linear-gradient(#cbcbcb, #a6a6a6);
}
.st.lined {
  border-bottom: 2px solid #555;
}
.st.dark {
  background: #6d6d6d;
}
.st.scale {
  gap: 2px;
  justify-content: flex-start;
  padding-left: 2px;
}
.st em {
  font: normal 15px/18px "Open Sans", sans-serif;
  color: #333;
  margin-right: 14px;
  position: relative;
}
.st em::after {
  content: "";
  position: absolute;
  left: 24px;
  top: 5px;
  border: 5px solid transparent;
  border-top: 6px solid #111;
}
.st.bulb {
  background: linear-gradient(#555 0, #888 3px, #a4a4a4);
}
.st.st-menu {
  position: relative;
}
.st.st-menu::after {
  content: "";
  position: absolute;
  left: 3px;
  top: 8px;
  border: 3px solid transparent;
  border-top: 5px solid #111;
}

.tip {
  position: absolute;
  left: 264px;
  top: 752px;
  width: 108px;
  height: 28px;
  box-sizing: border-box;
  padding-left: 6px;
  background: linear-gradient(#fff, #f0f0f6);
  border: 1px solid #bbb;
  border-radius: 2px;
  box-shadow: 1px 2px 3px rgba(0, 0, 0, 0.35);
  font-size: 12.2px;
  line-height: 28px;
  color: #666c78;
  white-space: nowrap;
  z-index: 2;
}
.red-arrow {
  position: absolute;
  left: 221px;
  top: 720px;
  z-index: 3;
}
</style>

<style>
html,
body {
  margin: 0;
  background: #fff;
}
</style>
